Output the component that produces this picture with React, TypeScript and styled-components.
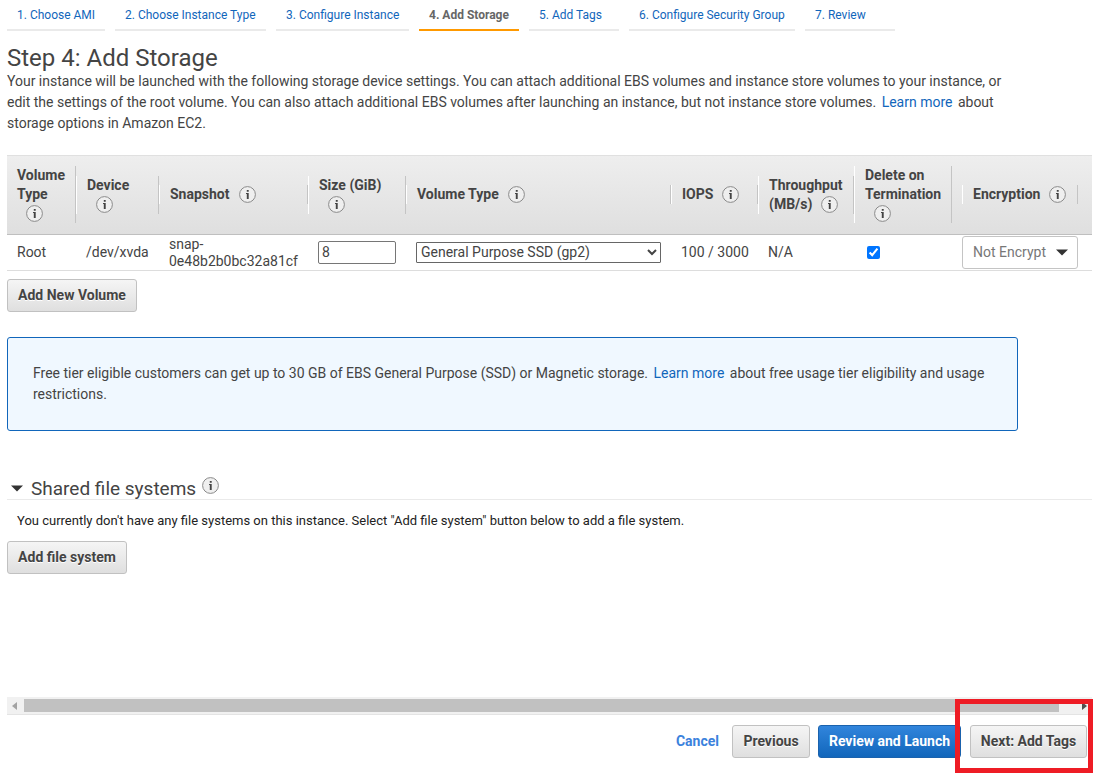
import React from "react";
import styled, { createGlobalStyle, css } from "styled-components";

const GlobalStyle = createGlobalStyle`
  *, *::before, *::after { box-sizing: border-box; }
  html, body { margin: 0; padding: 0; background: #fff; }
  body {
    font-family: Roboto, "Liberation Sans", sans-serif;
    font-size: 14px;
    line-height: 21px;
    color: #444;
    overflow: hidden;
  }
`;

const Page = styled.div`
  width: 1100px;
  height: 775px;
  padding: 0 8px 0 7px;
  display: flex;
  flex-direction: column;
  overflow: hidden;
`;

const Steps = styled.nav`
  display: flex;
  gap: 10px;
  height: 31px;
`;

const Step = styled.a<{ $width: number; $active?: boolean }>`
  width: ${(p) => p.$width}px;
  padding: 5px 0 0 10px;
  font-size: 12px;
  line-height: 20px;
  white-space: nowrap;
  text-decoration: none;
  color: ${(p) => (p.$active ? "#666" : "#1166bb")};
  font-weight: ${(p) => (p.$active ? 700 : 400)};
  border-bottom: 2px solid ${(p) => (p.$active ? "#ff9900" : "#eaeaea")};
`;

const Title = styled.h1`
  margin: 14px 0 0;
  font-size: 24px;
  line-height: 26px;
  font-weight: 400;
`;

const Intro = styled.p`
  margin: 0;
  width: 1010px;
  letter-spacing: -0.006px;
`;

const Link = styled.a`
  color: #1166bb;
  text-decoration: none;
  margin: 0 2px;
`;

const columns = css`
  display: grid;
  grid-template-columns: 69px 83px 149px 98px 265px 87px 96px 108px 116px;
`;

const Table = styled.section`
  margin-top: 21px;
`;

const HeaderRow = styled.div`
  ${columns}
  height: 80px;
  padding-bottom: 1px;
  align-items: center;
  background: linear-gradient(#eeeeee, #dfdfdf);
  border-top: 1px solid #e0e0e0;
  border-bottom: 1px solid #bfbfbf;
`;

const HeaderCell = styled.div<{ $first?: boolean; $width?: number }>`
  width: ${(p) => (p.$width ? `${p.$width}px` : "auto")};
  padding-left: ${(p) => (p.$first ? 9 : 10)}px;
  border-left: 1px solid ${(p) => (p.$first ? "transparent" : "#fff")};
  border-right: 1px solid #c4c4c4;
  font-weight: 700;
  line-height: 19px;
  white-space: nowrap;
`;

const HeaderLine = styled.div`
  display: flex;
  align-items: center;
  height: 19px;
`;

const DataRow = styled.div`
  ${columns}
  height: 36px;
  align-items: center;
  border-bottom: 1px solid #ddd;
`;

const Cell = styled.div<{ $pad?: number }>`
  padding-left: ${(p) => p.$pad ?? 10}px;
  line-height: 17px;
  display: flex;
  align-items: center;
`;

const SizeInput = styled.input`
  width: 78px;
  height: 23px;
  margin: 0;
  padding: 0 3px 2px;
  border: 1px solid #767676;
  border-radius: 2px;
  font: 14px Roboto, sans-serif;
  color: #444;
`;

const TypeSelect = styled.select`
  width: 245px;
  height: 21px;
  margin: 0;
  padding: 0 0 1px;
  border: 1px solid #666;
  border-radius: 1px;
  background: #fff;
  font: 14px Roboto, sans-serif;
  color: #444;
`;

const Checkbox = styled.input`
  width: 13px;
  height: 13px;
  margin: 0;
`;

const EncryptionPicker = styled.button`
  width: 116px;
  height: 33px;
  padding: 0 9px 1px 10px;
  display: flex;
  align-items: center;
  justify-content: space-between;
  border: 1px solid #c4c4c4;
  border-radius: 3px;
  background: #fff;
  font: 14px Roboto, sans-serif;
  color: #777;
`;

const Button = styled.button<{ $primary?: boolean; $width: number }>`
  width: ${(p) => p.$width}px;
  height: 33px;
  padding: 0 0 2px;
  flex: none;
  border: 1px solid ${(p) => (p.$primary ? "#1a62ad" : "#c1c1c1")};
  border-radius: 3px;
  background: ${(p) =>
    p.$primary ? "linear-gradient(#3185dc, #1166bb)" : "linear-gradient(#f5f5f5, #dfdfdf)"};
  font: 700 14px Roboto, sans-serif;
  color: ${(p) => (p.$primary ? "#fff" : "#444")};
  text-shadow: ${(p) => (p.$primary ? "none" : "0 1px 0 #fff")};
  white-space: nowrap;
`;

const TableActions = styled.div`
  padding-top: 8px;
`;

const Notice = styled.aside`
  margin-top: 25px;
  width: 1011px;
  height: 94px;
  padding: 25px;
  border: 1px solid #1166bb;
  border-radius: 3px;
  background: #f0f8ff;
  letter-spacing: -0.006px;
`;

const SectionHeading = styled.h2`
  margin: 42px 0 0;
  height: 27px;
  padding-left: 4px;
  display: flex;
  align-items: center;
  border-bottom: 1px solid #eaeaea;
  font-size: 19px;
  line-height: 26px;
  font-weight: 400;
`;

const HeadingText = styled.span`
  margin: 5px -3px 0 8px;
`;

const HeadingIcon = styled.span`
  padding-bottom: 2px;
`;

const Caret = styled.svg<{ $top?: number }>`
  display: block;
  flex: none;
  margin-top: ${(p) => p.$top ?? 0}px;
  fill: #333;
`;

const EmptyText = styled.p`
  margin: 10px 0;
  padding-left: 10px;
  font-size: 13px;
  color: #222;
`;

const ScrollTrack = styled.div`
  margin-top: auto;
  display: flex;
  align-items: center;
  justify-content: space-between;
  height: 18px;
  padding: 0 5px;
  background: #f1f1f1;
  border-bottom: 1px solid #e4e4e4;
`;

const ScrollThumb = styled.div`
  width: 1035px;
  height: 13px;
  margin: 0 18px 0 2px;
  background: #c1c1c1;
`;

const Footer = styled.footer`
  position: relative;
  height: 60px;
  padding: 10px 5px 0 0;
  display: flex;
  justify-content: flex-end;
`;

const Cancel = styled.a`
  margin-right: 13px;
  line-height: 33px;
  font-weight: 700;
  color: #3b82dd;
`;

const FooterButtons = styled.div`
  display: flex;
  gap: 8px;
`;

const NextSlot = styled.div`
  margin-left: 1px;
`;

const Highlight = styled.div`
  position: absolute;
  right: -1px;
  bottom: 2px;
  width: 138px;
  height: 74px;
  border: 5px solid #ee1c25;
`;

const InfoSvg = styled.svg`
  display: block;
  flex: none;
  margin-left: 9px;
`;

const Info = () => (
  <InfoSvg width="17" height="17" viewBox="0 0 17 17" aria-label="Info">
    <circle cx="8.5" cy="8.5" r="7.9" fill="#efefef" stroke="#8a8a8a" />
    <path d="M7.8 4h1.9v1.7H7.8zM7 7h2.7v6H7.8V8H7z" fill="#444" />
  </InfoSvg>
);

const steps = [
  { label: "1. Choose AMI", width: 98 },
  { label: "2. Choose Instance Type", width: 151 },
  { label: "3. Configure Instance", width: 133 },
  { label: "4. Add Storage", width: 100, active: true },
  { label: "5. Add Tags", width: 90 },
  { label: "6. Configure Security Group", width: 166 },
  { label: "7. Review", width: 90 },
];

// A line set to "" holds only the info icon.
const headers: { lines: string[]; width?: number }[] = [
  { lines: ["Volume", "Type", ""] },
  { lines: ["Device", ""] },
  { lines: ["Snapshot"] },
  { lines: ["Size (GiB)", ""] },
  { lines: ["Volume Type"] },
  { lines: ["IOPS"] },
  { lines: ["Throughput", "(MB/s)"] },
  { lines: ["Delete on", "Termination", ""], width: 98 },
  { lines: ["Encryption"] },
];

export default function App() {
  return (
    <Page>
      <GlobalStyle />
      <Steps>
        {steps.map((s) => (
          <Step key={s.label} $width={s.width} $active={s.active}>
            {s.label}
          </Step>
        ))}
      </Steps>
      <Title>Step 4: Add Storage</Title>
      <Intro>
        Your instance will be launched with the following storage device settings. You can attach
        additional EBS volumes and instance store volumes to your instance, or
        <br />
        edit the settings of the root volume. You can also attach additional EBS volumes after
        launching an instance, but not instance store volumes. <Link>Learn more</Link> about
        <br />
        storage options in Amazon EC2.
      </Intro>

      <Table>
        <HeaderRow>
          {headers.map((h, i) => (
            <HeaderCell key={i} $first={i === 0} $width={h.width}>
              {h.lines.map((line, n) => (
                <HeaderLine key={n}>
                  {line}
                  {n === h.lines.length - 1 && <Info />}
                </HeaderLine>
              ))}
            </HeaderCell>
          ))}
        </HeaderRow>
        <DataRow>
          <Cell>Root</Cell>
          <Cell>/dev/xvda</Cell>
          <Cell>
            snap-
            <br />
            0e48b2b0bc32a81cf
          </Cell>
          <Cell>
            <SizeInput defaultValue="8" />
          </Cell>
          <Cell>
            <TypeSelect>
              <option>General Purpose SSD (gp2)</option>
            </TypeSelect>
          </Cell>
          <Cell>100 / 3000</Cell>
          <Cell>N/A</Cell>
          <Cell $pad={13}>
            <Checkbox type="checkbox" defaultChecked />
          </Cell>
          <Cell $pad={0}>
            <EncryptionPicker>
              Not Encrypt
              <Caret $top={1} width="12" height="7" viewBox="0 0 12 7">
                <path d="M0 .5h12L6 6.5z" />
              </Caret>
            </EncryptionPicker>
          </Cell>
        </DataRow>
      </Table>
      <TableActions>
        <Button $width={130}>Add New Volume</Button>
      </TableActions>

      <Notice>
        Free tier eligible customers can get up to 30 GB of EBS General Purpose (SSD) or Magnetic
        storage. <Link>Learn more</Link> about free usage tier eligibility and usage
        <br />
        restrictions.
      </Notice>

      <SectionHeading>
        <Caret $top={5} width="12" height="7" viewBox="0 0 12 7">
          <path d="M0 .5h12L6 6.5z" />
        </Caret>
        <HeadingText>Shared file systems</HeadingText>
        <HeadingIcon>
          <Info />
        </HeadingIcon>
      </SectionHeading>
      <EmptyText>
        You currently don't have any file systems on this instance. Select "Add file system" button
        below to add a file system.
      </EmptyText>
      <Button $width={120}>Add file system</Button>

      <ScrollTrack>
        <svg width="5" height="8" viewBox="0 0 5 8">
          <path d="M5 0v8L0 4z" fill="#a3a3a3" />
        </svg>
        <ScrollThumb />
        <svg width="5" height="8" viewBox="0 0 5 8">
          <path d="M0 0v8l5-4z" fill="#505050" />
        </svg>
      </ScrollTrack>
      <Footer>
        <Cancel>Cancel</Cancel>
        <FooterButtons>
          <Button $width={78}>Previous</Button>
          <Button $width={143} $primary>
            Review and Launch
          </Button>
          <NextSlot>
            <Button $width={117}>Next: Add Tags</Button>
          </NextSlot>
        </FooterButtons>
        <Highlight />
      </Footer>
    </Page>
  );
}
